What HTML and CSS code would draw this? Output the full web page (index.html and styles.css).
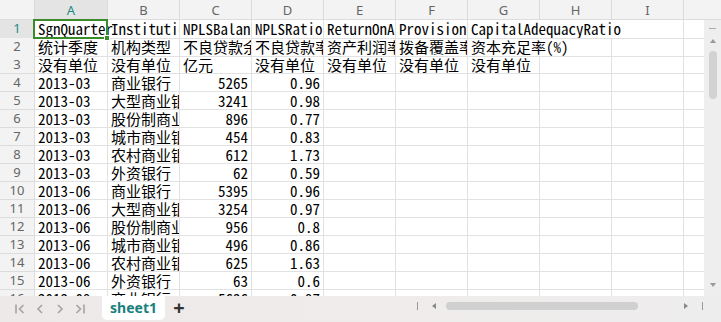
FILE: index.html
```html
<!DOCTYPE html>
<html lang="zh-CN">
<head>
  <meta charset="UTF-8">
  <title>sheet1</title>
  <link rel="stylesheet" href="styles.css">
</head>
<body>

<div class="book">
  <div class="sheet">
    <div class="grid" id="grid">
      <div class="row head">
        <div class="cell corner"></div>
        <div class="cell ch active-col">A</div>
        <div class="cell ch">B</div>
        <div class="cell ch">C</div>
        <div class="cell ch">D</div>
        <div class="cell ch">E</div>
        <div class="cell ch">F</div>
        <div class="cell ch">G</div>
        <div class="cell ch">H</div>
        <div class="cell ch">I</div>
        <div class="cell ch last"></div>
      </div>
      <!-- data rows are built by the script below -->
    </div>

    <div class="vscroll">
      <div class="vscroll-top"></div>
      <div class="vscroll-track">
        <span class="vs-dash"></span>
        <span class="vs-up"></span>
        <span class="vs-thumb"></span>
        <span class="vs-down"></span>
      </div>
    </div>
  </div>

  <div class="tabbar">
    <div class="tab-nav">
      <svg width="12" height="12" viewBox="0 0 12 12"><path d="M2 1.5v9M9.5 2L5.5 6l4 4" fill="none" stroke="#a3a3a3" stroke-width="1.6"/></svg>
      <svg width="12" height="12" viewBox="0 0 12 12"><path d="M8 2L4 6l4 4" fill="none" stroke="#a3a3a3" stroke-width="1.6"/></svg>
      <svg width="12" height="12" viewBox="0 0 12 12"><path d="M4 2l4 4-4 4" fill="none" stroke="#a3a3a3" stroke-width="1.6"/></svg>
      <svg width="12" height="12" viewBox="0 0 12 12"><path d="M2.5 2l4 4-4 4M10 1.5v9" fill="none" stroke="#a3a3a3" stroke-width="1.6"/></svg>
    </div>
    <div class="tab">sheet1</div>
    <div class="tab-add">+</div>
    <div class="hscroll">
      <span class="hs-bar"></span>
      <span class="hs-left"></span>
      <span class="hs-thumb"></span>
      <span class="hs-right"></span>
      <span class="hs-bar"></span>
    </div>
  </div>
</div>

<script>
  const rows = [
    ["SgnQuarter", "InstitutionType", "NPLSBalance", "NPLSRatio", "ReturnOnAssets", "ProvisionCoverage", "CapitalAdequacyRatio"],
    ["统计季度", "机构类型", "不良贷款余额", "不良贷款率(%)", "资产利润率(%)", "拨备覆盖率(%)", "资本充足率(%)"],
    ["没有单位", "没有单位", "亿元", "没有单位", "没有单位", "没有单位", "没有单位"],
    ["2013-03", "商业银行", 5265, 0.96],
    ["2013-03", "大型商业银行", 3241, 0.98],
    ["2013-03", "股份制商业银行", 896, 0.77],
    ["2013-03", "城市商业银行", 454, 0.83],
    ["2013-03", "农村商业银行", 612, 1.73],
    ["2013-03", "外资银行", 62, 0.59],
    ["2013-06", "商业银行", 5395, 0.96],
    ["2013-06", "大型商业银行", 3254, 0.97],
    ["2013-06", "股份制商业银行", 956, 0.8],
    ["2013-06", "城市商业银行", 496, 0.86],
    ["2013-06", "农村商业银行", 625, 1.63],
    ["2013-06", "外资银行", 63, 0.6],
    ["2013-09", "商业银行", 5636, 0.97]
  ];

  const grid = document.getElementById("grid");

  rows.forEach(function(data, i) {
    const row = document.createElement("div");
    row.className = "row";

    const num = document.createElement("div");
    num.className = "cell rh" + (i === 0 ? " active-row" : "");
    num.textContent = i + 1;
    row.appendChild(num);

    // 9 visible columns A..I plus the cut-off J
    for (let c = 0; c < 10; c++) {
      const cell = document.createElement("div");
      cell.className = "cell";
      const value = data[c];
      if (value !== undefined) {
        cell.textContent = value;
        if (typeof value === "number") cell.classList.add("num");
      }
      if (i === 0 && c === 0) cell.classList.add("active");
      // long text in G spills over the empty cells to its right
      if (i === 0 && (c === 6 || c === 7)) cell.classList.add("spill");
      if (i === 1 && c === 6) cell.classList.add("spill");
      if (c === 9) cell.classList.add("last");
      row.appendChild(cell);
    }
    grid.appendChild(row);
  });
</script>

</body>
</html>
```

FILE: styles.css
```css
body {
  margin: 0;
  background-color: #fff;
  font-family: "Noto Sans Mono CJK SC", "Liberation Mono", "Noto Sans CJK SC", monospace;
  font-size: 15px;
  color: #000;
  overflow: hidden;
}
.book {
  display: flex;
  flex-direction: column;
  width: 721px;
  height: 322px;
}
.sheet {
  display: flex;
  height: 296px;
  overflow: hidden;
}
.grid {
  flex: 1;
  overflow: hidden;
}
.row {
  display: grid;
  grid-template-columns: 35px 73px repeat(8, 72px) 1fr;
  height: 18px;
}
.row.head {
  height: 20px;
  background-color: #f3f3f3;
}
.cell {
  box-sizing: border-box;
  border-right: 1px solid #e2e2e2;
  border-bottom: 1px solid #e2e2e2;
  padding: 0 2px 0 3px;
  line-height: 18px;
  white-space: nowrap;
  overflow: hidden;
}
.cell.num {
  text-align: right;
  padding-right: 3px;
}
.cell.last {
  border-right: none;
}
.cell.spill {
  overflow: visible;
  border-right-color: transparent;
}
.ch, .rh, .corner {
  background-color: #f3f3f3;
  border-color: #dcdcdc;
  color: #666;
  text-align: center;
  font-family: "Noto Sans", sans-serif;
  font-size: 13px;
  line-height: 17px;
  padding: 0;
}
.ch {
  line-height: 20px;
}
.active-col, .active-row {
  background-color: #e4e4e4;
  color: #1f8a84;
}
.cell.active {
  position: relative;
  overflow: visible;
}
.cell.active::before {
  content: "";
  position: absolute;
  left: -2px;
  top: -1px;
  right: -1px;
  bottom: -1px;
  border: 2px solid #3b8a2c;
}
.cell.active::after {
  content: "";
  position: absolute;
  right: -3px;
  bottom: -3px;
  width: 4px;
  height: 4px;
  background-color: #3b8a2c;
  border: 1px solid #fff;
}

/* vertical scrollbar */
.vscroll {
  width: 17px;
  display: flex;
  flex-direction: column;
  background-color: #eeeeee;
}
.vscroll-top {
  height: 20px;
  box-sizing: border-box;
  background-color: #f3f3f3;
  border-bottom: 1px solid #dcdcdc;
}
.vscroll-track {
  flex: 1;
  display: flex;
  flex-direction: column;
  align-items: center;
}
.vs-dash {
  width: 7px;
  height: 1px;
  margin-top: 8px;
  background-color: #aaa;
}
.vs-up, .vs-down {
  width: 0;
  height: 0;
  border-left: 3px solid transparent;
  border-right: 3px solid transparent;
}
.vs-up {
  margin-top: 10px;
  border-bottom: 4px solid #999;
}
.vs-down {
  margin-top: auto;
  margin-bottom: 9px;
  border-top: 4px solid #999;
}
.vs-thumb {
  width: 8px;
  height: 48px;
  margin-top: 8px;
  border-radius: 4px;
  background-color: #d2d2d2;
}

/* sheet tabs */
.tabbar {
  height: 26px;
  display: flex;
  align-items: flex-start;
  background: linear-gradient(90deg, #ede9e9, #f0ebeb 40%, #eeeded);
}
.tab-nav {
  display: flex;
  gap: 8px;
  padding: 7px 0 0 14px;
  width: 88px;
}
.tab {
  width: 63px;
  height: 24px;
  line-height: 24px;
  background-color: #fff;
  border-radius: 0 0 5px 5px;
  text-align: center;
  color: #1a7f7d;
  font-family: "Noto Sans", sans-serif;
  font-weight: bold;
  font-size: 14px;
}
.tab-add {
  width: 28px;
  text-align: center;
  font-family: "Noto Sans", sans-serif;
  font-size: 20px;
  font-weight: bold;
  line-height: 24px;
  color: #333;
}
.hscroll {
  display: flex;
  align-items: center;
  margin-left: auto;
  margin-right: 18px;
  height: 20px;
  margin-top: 0;
}
.hs-bar {
  width: 1px;
  height: 8px;
  background-color: #999;
}
.hs-left, .hs-right {
  width: 0;
  height: 0;
  border-top: 3px solid transparent;
  border-bottom: 3px solid transparent;
}
.hs-left {
  margin: 0 10px 0 14px;
  border-right: 4px solid #888;
}
.hs-right {
  margin: 0 14px 0 46px;
  border-left: 4px solid #888;
}
.hs-thumb {
  width: 192px;
  height: 8px;
  border-radius: 4px;
  background-color: #d0d0d0;
}
```
